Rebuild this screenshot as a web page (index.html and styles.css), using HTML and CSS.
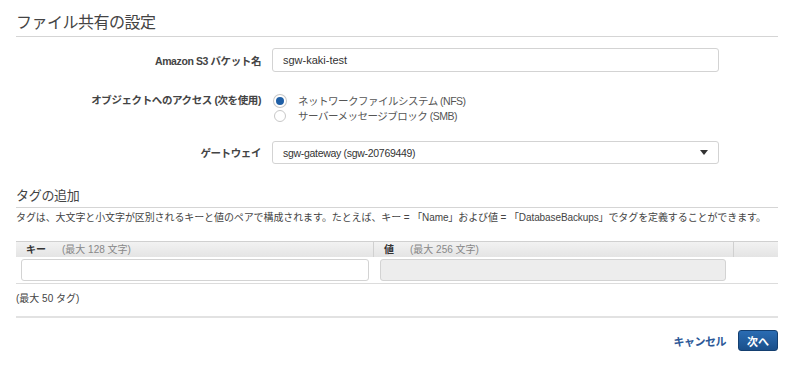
FILE: index.html
```html
<!DOCTYPE html>
<html lang="ja">
<head>
    <meta charset="UTF-8">
    <title>ファイル共有の設定</title>
    <link rel="stylesheet" href="styles.css">
</head>
<body>
    <div class="page">
        <!-- File share settings -->
        <h2 class="section-title">ファイル共有の設定</h2>

        <div class="form-row row-bucket">
            <label class="form-label">Amazon S3 バケット名</label>
            <input type="text" class="text-input" value="sgw-kaki-test">
        </div>

        <div class="form-row row-access">
            <label class="form-label">オブジェクトへのアクセス (次を使用)</label>
            <div class="radio-group">
                <label class="radio-option"><span class="radio checked"></span>ネットワークファイルシステム (NFS)</label>
                <label class="radio-option"><span class="radio"></span>サーバーメッセージブロック (SMB)</label>
            </div>
        </div>

        <div class="form-row row-gateway">
            <label class="form-label">ゲートウェイ</label>
            <div class="select-box">
                <span>sgw-gateway (sgw-20769449)</span>
                <span class="caret"></span>
            </div>
        </div>

        <!-- Tags -->
        <h3 class="sub-title">タグの追加</h3>
        <p class="tag-help">タグは、大文字と小文字が区別されるキーと値のペアで構成されます。たとえば、キー = 「Name」および値 = 「DatabaseBackups」でタグを定義することができます。</p>

        <div class="tag-table">
            <div class="tag-head">
                <div class="col-key"><b>キー</b><span class="hint">(最大 128 文字)</span></div>
                <div class="col-value"><b>値</b><span class="hint">(最大 256 文字)</span></div>
                <div class="col-action"></div>
            </div>
            <div class="tag-row">
                <div class="col-key"><input type="text" class="cell-input"></div>
                <div class="col-value"><input type="text" class="cell-input disabled" disabled></div>
                <div class="col-action"></div>
            </div>
        </div>
        <p class="tag-limit">(最大 50 タグ)</p>

        <div class="footer">
            <a class="cancel-link">キャンセル</a>
            <button type="button" class="next-button">次へ</button>
        </div>
    </div>
</body>
</html>
```

FILE: styles.css
```css
/* General */
body {
    margin: 0;
    padding: 0;
    background-color: #ffffff;
    color: #444;
    font-family: "Liberation Sans", Arial, "Noto Sans CJK JP", sans-serif;
    font-size: 11px;
}

.page {
    width: 762px;
    margin-left: 16px;
}

.section-title {
    margin: 0;
    padding-top: 11px;
    padding-bottom: 1px;
    font-size: 16px;
    letter-spacing: -0.5px;
    line-height: 24px;
    font-weight: normal;
    color: #444;
    border-bottom: 1px solid #d5d5d5;
}

/* Form rows */
.form-row {
    display: flex;
    align-items: center;
}

.form-label {
    width: 245px;
    margin-right: 11px;
    text-align: right;
    font-size: 10.5px;
    letter-spacing: -0.4px;
    font-weight: bold;
    color: #444;
}

.row-bucket {
    margin-top: 11px;
}

.row-access {
    margin-top: 21px;
    align-items: flex-start;
}

.row-access .form-label {
    line-height: 15px;
}

.row-gateway {
    margin-top: 18px;
}

.text-input {
    width: 447px;
    height: 24px;
    box-sizing: border-box;
    padding: 0 10px;
    border: 1px solid #d3d3d3;
    border-radius: 3px;
    font-family: inherit;
    font-size: 11px;
    color: #333;
}

.radio-group {
    display: flex;
    flex-direction: column;
}

.radio-option {
    display: flex;
    align-items: center;
    height: 15px;
    font-size: 10.5px;
    letter-spacing: -0.5px;
    color: #555;
}

.radio {
    width: 12px;
    height: 12px;
    margin-left: 2px;
    margin-right: 12px;
    border: 1px solid #c8c8c8;
    border-radius: 50%;
    box-sizing: border-box;
    background: #fff;
}

.radio.checked {
    border: 2px solid #fff;
    box-shadow: 0 0 0 1px #c8c8c8;
    background: #1f5fa6;
}

.select-box {
    width: 447px;
    height: 23px;
    box-sizing: border-box;
    padding: 0 10px;
    border: 1px solid #d3d3d3;
    border-radius: 3px;
    display: flex;
    align-items: center;
    justify-content: space-between;
    font-size: 10.5px;
    letter-spacing: -0.3px;
    color: #333;
}

.caret {
    width: 0;
    height: 0;
    border-left: 4px solid transparent;
    border-right: 4px solid transparent;
    border-top: 5px solid #333;
}

/* Tags */
.sub-title {
    margin: 0;
    margin-top: 22px;
    padding-bottom: 1px;
    font-size: 13px;
    letter-spacing: -0.3px;
    line-height: 20px;
    font-weight: normal;
    color: #444;
    border-bottom: 1px solid #d5d5d5;
}

.tag-help {
    margin: 3px 0 0;
    font-size: 10px;
    letter-spacing: -0.1px;
    line-height: 13px;
    white-space: nowrap;
    color: #444;
}

.tag-table {
    margin-top: 17px;
    border-bottom: 1px solid #dcdcdc;
}

.tag-head {
    display: flex;
    height: 15px;
    line-height: 15px;
    background: linear-gradient(#f2f2f2, #e4e4e4);
    border-top: 1px solid #d0d0d0;
    font-size: 10px;
}

.tag-head b {
    color: #333;
    margin-left: 10px;
    margin-right: 16px;
}

.tag-head .hint {
    color: #888;
}

.tag-head .col-value,
.tag-head .col-action {
    border-left: 1px solid #d0d0d0;
}

.col-key {
    width: 357px;
}

.col-value {
    width: 359px;
}

.col-action {
    flex: 1;
}

.tag-row {
    display: flex;
    padding: 2px 0 2px;
}

.tag-row .col-key {
    padding-left: 5px;
    box-sizing: border-box;
}

.tag-row .col-value {
    padding-left: 7px;
    box-sizing: border-box;
}

.cell-input {
    width: 348px;
    height: 22px;
    box-sizing: border-box;
    border: 1px solid #d3d3d3;
    border-radius: 3px;
    background: #fff;
}

.cell-input.disabled {
    width: 346px;
    background: #ededed;
}

.tag-limit {
    margin: 8px 0 0;
    font-size: 10px;
    line-height: 13px;
    color: #444;
}

/* Footer */
.footer {
    margin-top: 11px;
    border-top: 2px solid #e2e2e2;
    padding-top: 12px;
    display: flex;
    justify-content: flex-end;
    align-items: center;
}

.cancel-link {
    color: #2b5797;
    font-size: 11px;
    letter-spacing: -0.5px;
    font-weight: bold;
    margin-right: 12px;
    cursor: pointer;
}

.next-button {
    width: 40px;
    height: 21px;
    padding: 0;
    background: linear-gradient(#2a6cb3, #1a4f8a);
    border: 1px solid #143f70;
    border-radius: 3px;
    color: #fff;
    font-family: inherit;
    font-size: 11px;
    font-weight: bold;
    cursor: pointer;
}
```
